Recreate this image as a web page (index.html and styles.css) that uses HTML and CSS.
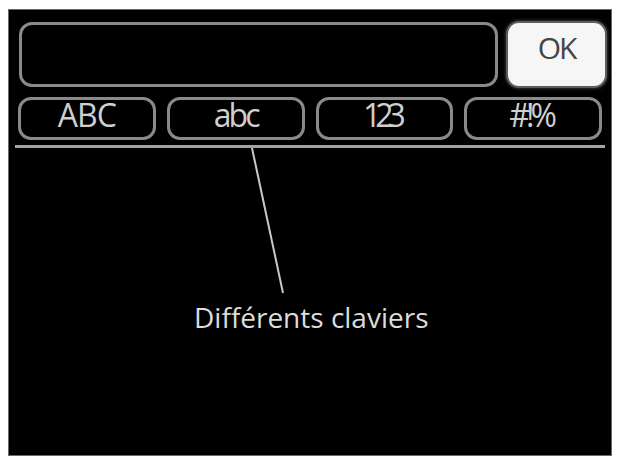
FILE: index.html
```html
<!DOCTYPE html>
<html lang="fr">
<head>
<meta charset="utf-8">
<title>Claviers</title>
<link rel="stylesheet" href="styles.css">
</head>
<body>
<div class="screen">
  <div class="top-row">
    <div class="input-box"></div>
    <div class="ok-btn">OK</div>
  </div>
  <div class="tabs">
    <div class="tab">ABC</div>
    <div class="tab tab-lower">abc</div>
    <div class="tab tab-num">123</div>
    <div class="tab tab-sym">#!%</div>
  </div>
  <div class="divider"></div>
  <div class="annotation">
    <svg class="pointer" width="617" height="160" viewBox="0 0 617 160">
      <line x1="233" y1="0" x2="264" y2="145" stroke="#c8c8c8" stroke-width="2"/>
    </svg>
    <div class="caption">Différents claviers</div>
  </div>
</div>
</body>
</html>
```

FILE: styles.css
```css
html, body {
  margin: 0;
  padding: 0;
  background: #ffffff;
}

body {
  font-family: "Open Sans", "DejaVu Sans", sans-serif;
}

.screen {
  box-sizing: border-box;
  margin: 9px 0 0 8px;
  width: 604px;
  height: 447px;
  background: #000000;
  border: 1px solid #6a6a6a;
  padding: 12px 6px 0 10px;
}

.top-row {
  display: flex;
  align-items: flex-start;
  gap: 10px;
}

.input-box {
  box-sizing: border-box;
  width: 479px;
  height: 65px;
  border: 3px solid #8a8a8a;
  border-radius: 13px;
  background: #000;
}

.ok-btn {
  box-sizing: border-box;
  margin-top: 1px;
  width: 97px;
  height: 63px;
  background: #f6f6f6;
  border-radius: 11px;
  box-shadow: 0 0 0 2px #5e5e5e, 0 0 3px 3px #333;
  color: #454545;
  font-size: 30px;
  line-height: 32px;
  padding-top: 9px;
  text-align: center;
  letter-spacing: -2px;
}

.tabs {
  display: flex;
  gap: 11px;
  margin-top: 10px;
  margin-left: -1px;
  width: 584px;
}

.tab {
  box-sizing: border-box;
  flex: 1;
  height: 43px;
  border: 3px solid #8a8a8a;
  border-radius: 13px;
  color: #cfcfcf;
  font-size: 32px;
  line-height: 29px;
  text-align: center;
  letter-spacing: -1px;
}

.tab-lower {
  letter-spacing: -3px;
}

.tab-num {
  letter-spacing: -6px;
  text-indent: -6px;
}

.tab-sym {
  letter-spacing: -4px;
  text-indent: -4px;
}

.divider {
  margin-top: 5px;
  margin-left: -4px;
  width: 590px;
  height: 3px;
  background: #a2a2a2;
}

.annotation {
  position: relative;
}

.pointer {
  position: absolute;
  left: 0;
  top: 0;
}

.caption {
  padding-top: 150px;
  padding-left: 175px;
  color: #dcdcdc;
  font-size: 28px;
  line-height: normal;
}
```
